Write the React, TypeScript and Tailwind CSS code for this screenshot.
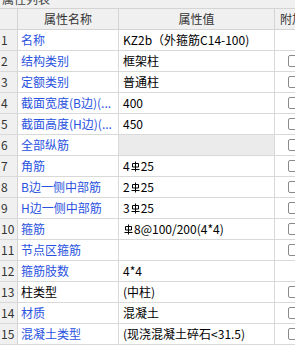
import React from 'react';

type Row = {
  name: string;
  value: React.ReactNode;
  blue?: boolean;
  gray?: boolean;
  check?: boolean;
};

function Steel() {
  return (
    <svg width="9" height="11" viewBox="0 0 9 11" className="inline-block mx-[1px] -mt-[2px] align-middle">
      <path d="M4.5 0.5V10.5M1.5 2.5H7.5V6H1.5Z M0.5 8.5H8.5" stroke="#000" strokeWidth="1" fill="none" />
    </svg>
  );
}

const rows: Row[] = [
  { name: '名称', value: 'KZ2b（外箍筋C14-100)', blue: true },
  { name: '结构类别', value: '框架柱', blue: true, check: true },
  { name: '定额类别', value: '普通柱', blue: true, check: true },
  { name: '截面宽度(B边)(...', value: '400', blue: true, check: true },
  { name: '截面高度(H边)(...', value: '450', blue: true, check: true },
  { name: '全部纵筋', value: '', blue: true, gray: true, check: true },
  { name: '角筋', value: <>4<Steel />25</>, blue: true, check: true },
  { name: 'B边一侧中部筋', value: <>2<Steel />25</>, blue: true, check: true },
  { name: 'H边一侧中部筋', value: <>3<Steel />25</>, blue: true, check: true },
  { name: '箍筋', value: <><Steel />8@100/200(4*4)</>, blue: true, check: true },
  { name: '节点区箍筋', value: '', blue: true, check: true },
  { name: '箍筋肢数', value: '4*4', blue: true },
  { name: '柱类型', value: '(中柱)', check: true },
  { name: '材质', value: '混凝土', blue: true, check: true },
  { name: '混凝土类型', value: '(现浇混凝土碎石<31.5)', blue: true, check: true },
];

export default function App() {
  return (
    <div
      className="w-[295px] h-[347px] overflow-hidden bg-white text-[12px] text-black"
      style={{ fontFamily: '"Microsoft YaHei", "Noto Sans CJK SC", sans-serif' }}
    >
      <div className="h-[9px] overflow-hidden bg-[#f0f0f0] border-b border-[#d4d4d4]">
        <div className="-mt-[9px] pl-[2px] leading-[16px] text-[#444]">属性列表</div>
      </div>
      <div className="grid grid-cols-[18px_101px_156px_1fr] h-[21px] bg-[#f0f0f0] border-b border-[#d4d4d4] leading-[20px]">
        <div className="border-r border-[#d4d4d4]" />
        <div className="border-r border-[#d4d4d4] text-center text-[#333]">属性名称</div>
        <div className="border-r border-[#d4d4d4] text-center text-[#333]">属性值</div>
        <div className="pl-[5px] text-[#333] whitespace-nowrap">附加</div>
      </div>
      {rows.map((r, i) => (
        <div key={i} className="grid grid-cols-[18px_101px_156px_1fr] h-[21px] border-b border-[#d9d9d9] leading-[20px]">
          <div className="bg-[#f0f0f0] border-r border-[#d4d4d4] text-[#333] pl-[1px] whitespace-nowrap">{i + 1}</div>
          <div className={`border-r border-[#d9d9d9] pl-[3px] whitespace-nowrap overflow-hidden ${r.blue ? 'text-[#2a52e0]' : 'text-black'}`}>
            {r.name}
          </div>
          <div className={`border-r border-[#d9d9d9] pl-[4px] whitespace-nowrap overflow-hidden ${r.gray ? 'bg-[#ebebeb]' : ''}`}>
            {r.value}
          </div>
          <div className="flex items-center pl-[13px]">
            {r.check && <div className="w-[12px] h-[12px] shrink-0 rounded-[2px] border border-[#8a8a8a] bg-white" />}
          </div>
        </div>
      ))}
    </div>
  );
}
